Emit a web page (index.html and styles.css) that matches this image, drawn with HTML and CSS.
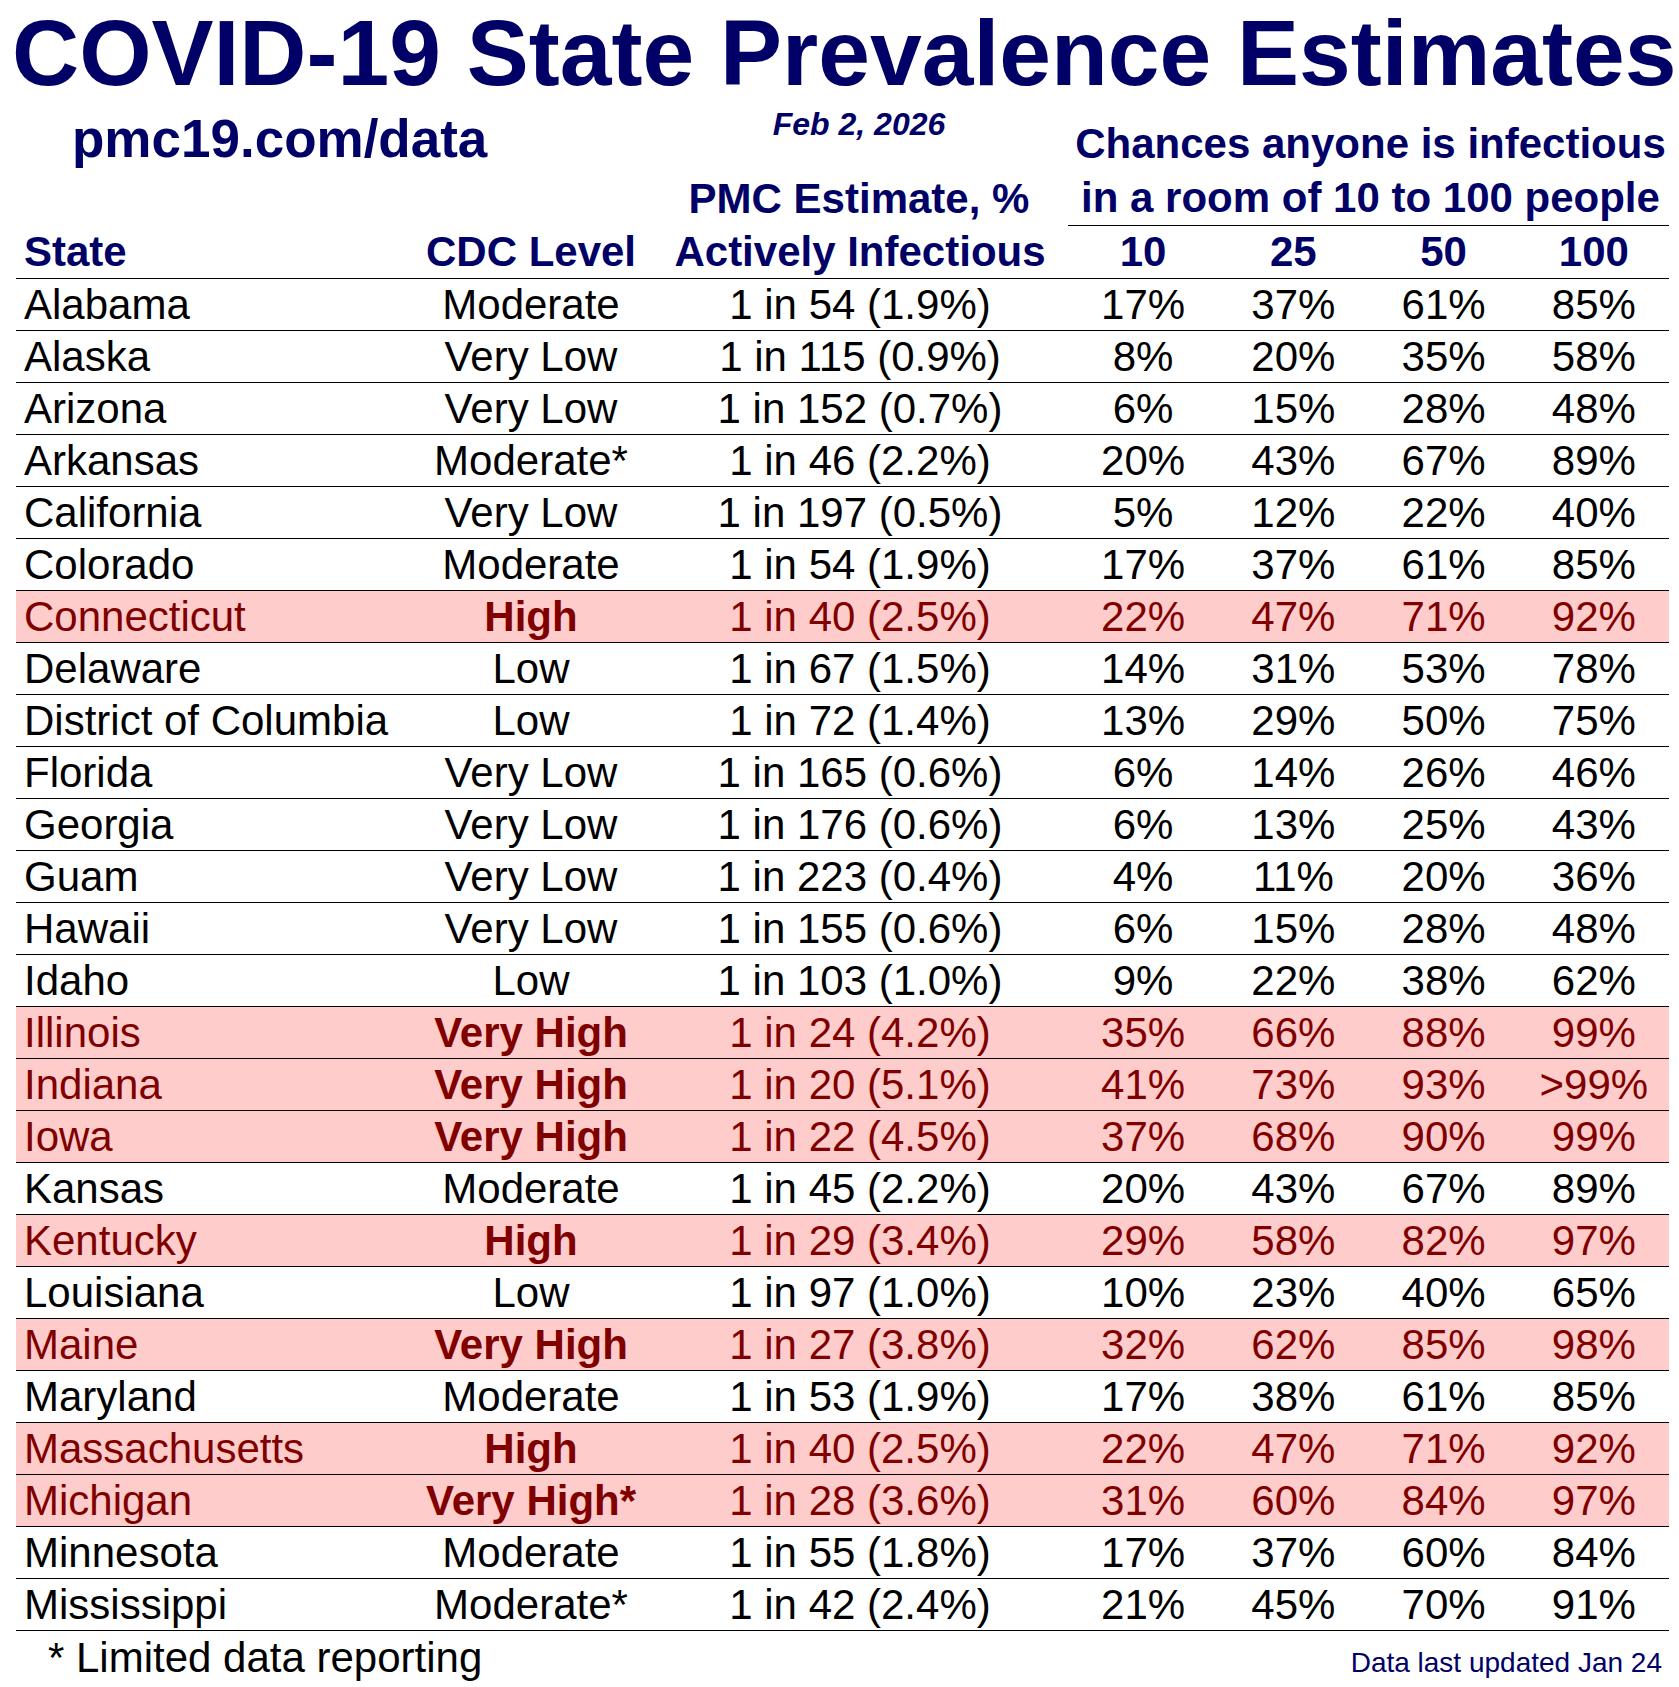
FILE: index.html
```html
<!DOCTYPE html>
<html lang="en">
<head>
<meta charset="utf-8">
<title>COVID-19 State Prevalence Estimates</title>
<link rel="stylesheet" href="styles.css">
</head>
<body>
<main class="page">
  <h1 class="title">COVID-19 State Prevalence Estimates</h1>
  <section class="top">
    <div class="site">pmc19.com/data</div>
    <div class="date">Feb 2, 2026</div>
    <div class="chances">Chances anyone is infectious<br>in a room of 10 to 100 people</div>
    <div class="pmc">PMC Estimate, %</div>
  </section>
  <div class="grid thead">
    <div class="c-state">State</div>
    <div class="c-mid">CDC Level</div>
    <div class="c-mid c-pmc">Actively Infectious</div>
    <div class="c-mid">10</div>
    <div class="c-mid">25</div>
    <div class="c-mid">50</div>
    <div class="c-mid">100</div>
  </div>
  <div class="tbody">
    <div class="grid row"><div class="c-state">Alabama</div><div class="c-mid">Moderate</div><div class="c-mid c-pmc">1 in 54 (1.9%)</div><div class="c-mid">17%</div><div class="c-mid">37%</div><div class="c-mid">61%</div><div class="c-mid">85%</div></div>
    <div class="grid row"><div class="c-state">Alaska</div><div class="c-mid">Very Low</div><div class="c-mid c-pmc">1 in 115 (0.9%)</div><div class="c-mid">8%</div><div class="c-mid">20%</div><div class="c-mid">35%</div><div class="c-mid">58%</div></div>
    <div class="grid row"><div class="c-state">Arizona</div><div class="c-mid">Very Low</div><div class="c-mid c-pmc">1 in 152 (0.7%)</div><div class="c-mid">6%</div><div class="c-mid">15%</div><div class="c-mid">28%</div><div class="c-mid">48%</div></div>
    <div class="grid row"><div class="c-state">Arkansas</div><div class="c-mid">Moderate*</div><div class="c-mid c-pmc">1 in 46 (2.2%)</div><div class="c-mid">20%</div><div class="c-mid">43%</div><div class="c-mid">67%</div><div class="c-mid">89%</div></div>
    <div class="grid row"><div class="c-state">California</div><div class="c-mid">Very Low</div><div class="c-mid c-pmc">1 in 197 (0.5%)</div><div class="c-mid">5%</div><div class="c-mid">12%</div><div class="c-mid">22%</div><div class="c-mid">40%</div></div>
    <div class="grid row"><div class="c-state">Colorado</div><div class="c-mid">Moderate</div><div class="c-mid c-pmc">1 in 54 (1.9%)</div><div class="c-mid">17%</div><div class="c-mid">37%</div><div class="c-mid">61%</div><div class="c-mid">85%</div></div>
    <div class="grid row hot"><div class="c-state">Connecticut</div><div class="c-mid lvl">High</div><div class="c-mid c-pmc">1 in 40 (2.5%)</div><div class="c-mid">22%</div><div class="c-mid">47%</div><div class="c-mid">71%</div><div class="c-mid">92%</div></div>
    <div class="grid row"><div class="c-state">Delaware</div><div class="c-mid">Low</div><div class="c-mid c-pmc">1 in 67 (1.5%)</div><div class="c-mid">14%</div><div class="c-mid">31%</div><div class="c-mid">53%</div><div class="c-mid">78%</div></div>
    <div class="grid row"><div class="c-state">District of Columbia</div><div class="c-mid">Low</div><div class="c-mid c-pmc">1 in 72 (1.4%)</div><div class="c-mid">13%</div><div class="c-mid">29%</div><div class="c-mid">50%</div><div class="c-mid">75%</div></div>
    <div class="grid row"><div class="c-state">Florida</div><div class="c-mid">Very Low</div><div class="c-mid c-pmc">1 in 165 (0.6%)</div><div class="c-mid">6%</div><div class="c-mid">14%</div><div class="c-mid">26%</div><div class="c-mid">46%</div></div>
    <div class="grid row"><div class="c-state">Georgia</div><div class="c-mid">Very Low</div><div class="c-mid c-pmc">1 in 176 (0.6%)</div><div class="c-mid">6%</div><div class="c-mid">13%</div><div class="c-mid">25%</div><div class="c-mid">43%</div></div>
    <div class="grid row"><div class="c-state">Guam</div><div class="c-mid">Very Low</div><div class="c-mid c-pmc">1 in 223 (0.4%)</div><div class="c-mid">4%</div><div class="c-mid">11%</div><div class="c-mid">20%</div><div class="c-mid">36%</div></div>
    <div class="grid row"><div class="c-state">Hawaii</div><div class="c-mid">Very Low</div><div class="c-mid c-pmc">1 in 155 (0.6%)</div><div class="c-mid">6%</div><div class="c-mid">15%</div><div class="c-mid">28%</div><div class="c-mid">48%</div></div>
    <div class="grid row"><div class="c-state">Idaho</div><div class="c-mid">Low</div><div class="c-mid c-pmc">1 in 103 (1.0%)</div><div class="c-mid">9%</div><div class="c-mid">22%</div><div class="c-mid">38%</div><div class="c-mid">62%</div></div>
    <div class="grid row hot"><div class="c-state">Illinois</div><div class="c-mid lvl">Very High</div><div class="c-mid c-pmc">1 in 24 (4.2%)</div><div class="c-mid">35%</div><div class="c-mid">66%</div><div class="c-mid">88%</div><div class="c-mid">99%</div></div>
    <div class="grid row hot"><div class="c-state">Indiana</div><div class="c-mid lvl">Very High</div><div class="c-mid c-pmc">1 in 20 (5.1%)</div><div class="c-mid">41%</div><div class="c-mid">73%</div><div class="c-mid">93%</div><div class="c-mid">&gt;99%</div></div>
    <div class="grid row hot"><div class="c-state">Iowa</div><div class="c-mid lvl">Very High</div><div class="c-mid c-pmc">1 in 22 (4.5%)</div><div class="c-mid">37%</div><div class="c-mid">68%</div><div class="c-mid">90%</div><div class="c-mid">99%</div></div>
    <div class="grid row"><div class="c-state">Kansas</div><div class="c-mid">Moderate</div><div class="c-mid c-pmc">1 in 45 (2.2%)</div><div class="c-mid">20%</div><div class="c-mid">43%</div><div class="c-mid">67%</div><div class="c-mid">89%</div></div>
    <div class="grid row hot"><div class="c-state">Kentucky</div><div class="c-mid lvl">High</div><div class="c-mid c-pmc">1 in 29 (3.4%)</div><div class="c-mid">29%</div><div class="c-mid">58%</div><div class="c-mid">82%</div><div class="c-mid">97%</div></div>
    <div class="grid row"><div class="c-state">Louisiana</div><div class="c-mid">Low</div><div class="c-mid c-pmc">1 in 97 (1.0%)</div><div class="c-mid">10%</div><div class="c-mid">23%</div><div class="c-mid">40%</div><div class="c-mid">65%</div></div>
    <div class="grid row hot"><div class="c-state">Maine</div><div class="c-mid lvl">Very High</div><div class="c-mid c-pmc">1 in 27 (3.8%)</div><div class="c-mid">32%</div><div class="c-mid">62%</div><div class="c-mid">85%</div><div class="c-mid">98%</div></div>
    <div class="grid row"><div class="c-state">Maryland</div><div class="c-mid">Moderate</div><div class="c-mid c-pmc">1 in 53 (1.9%)</div><div class="c-mid">17%</div><div class="c-mid">38%</div><div class="c-mid">61%</div><div class="c-mid">85%</div></div>
    <div class="grid row hot"><div class="c-state">Massachusetts</div><div class="c-mid lvl">High</div><div class="c-mid c-pmc">1 in 40 (2.5%)</div><div class="c-mid">22%</div><div class="c-mid">47%</div><div class="c-mid">71%</div><div class="c-mid">92%</div></div>
    <div class="grid row hot"><div class="c-state">Michigan</div><div class="c-mid lvl">Very High*</div><div class="c-mid c-pmc">1 in 28 (3.6%)</div><div class="c-mid">31%</div><div class="c-mid">60%</div><div class="c-mid">84%</div><div class="c-mid">97%</div></div>
    <div class="grid row"><div class="c-state">Minnesota</div><div class="c-mid">Moderate</div><div class="c-mid c-pmc">1 in 55 (1.8%)</div><div class="c-mid">17%</div><div class="c-mid">37%</div><div class="c-mid">60%</div><div class="c-mid">84%</div></div>
    <div class="grid row"><div class="c-state">Mississippi</div><div class="c-mid">Moderate*</div><div class="c-mid c-pmc">1 in 42 (2.4%)</div><div class="c-mid">21%</div><div class="c-mid">45%</div><div class="c-mid">70%</div><div class="c-mid">91%</div></div>
  </div>
  <footer class="foot">
    <div class="note">* Limited data reporting</div>
    <div class="updated">Data last updated Jan 24</div>
  </footer>
</main>
</body>
</html>
```
FILE: styles.css
```css
html, body {
  margin: 0;
  padding: 0;
  background: #ffffff;
}

body {
  font-family: "Liberation Sans", Arial, Helvetica, sans-serif;
  color: #000000;
}

.page {
  width: 1679px;
  height: 1687px;
  overflow: hidden;
}

.title {
  margin: 0 0 0 12px;
  font-size: 93px;
  line-height: 107px;
  font-weight: 700;
  color: #000066;
  white-space: nowrap;
}

.top,
.grid {
  display: grid;
  grid-template-columns: 400px 230px 422px repeat(4, 150.25px);
  margin-left: 16px;
  width: 1653px;
}

.top {
  grid-template-rows: 65px 54px;
  color: #000066;
  font-weight: 700;
}

.site {
  grid-column: 1 / 3;
  grid-row: 1 / 3;
  padding: 2px 0 0 56px;
  font-size: 53px;
  line-height: 60px;
}

.date {
  grid-column: 3;
  grid-row: 1;
  text-align: center;
  font-size: 32px;
  line-height: 34px;
  font-style: italic;
  padding: 0 0 0 4px;
}

.chances {
  grid-column: 4 / 8;
  grid-row: 1 / 3;
  align-self: end;
  text-align: center;
  font-size: 42px;
  line-height: 54px;
  border-bottom: 1px solid #000;
  white-space: nowrap;
  padding-left: 4px;
}

.pmc {
  grid-column: 3;
  grid-row: 2;
  text-align: center;
  font-size: 42px;
  line-height: 54px;
  padding-left: 4px;
}

.thead {
  color: #000066;
  font-weight: 700;
  font-size: 42px;
  line-height: 52px;
  border-bottom: 1px solid #000;
  white-space: nowrap;
}

.row {
  font-size: 42px;
  line-height: 51px;
  border-bottom: 1px solid #000;
  white-space: nowrap;
}

.c-state {
  padding-left: 8px;
}

.c-mid {
  text-align: center;
}

.c-pmc {
  padding-left: 6px;
}

.hot {
  background: #ffcccc;
  color: #800000;
}

.hot .lvl {
  font-weight: 700;
}

.foot {
  display: flex;
  justify-content: space-between;
  align-items: baseline;
  width: 1662px;
  padding-top: 3px;
}

.note {
  padding-left: 48px;
  font-size: 42px;
  line-height: 48px;
}

.updated {
  font-size: 28px;
  line-height: 32px;
  color: #000066;
}
```
